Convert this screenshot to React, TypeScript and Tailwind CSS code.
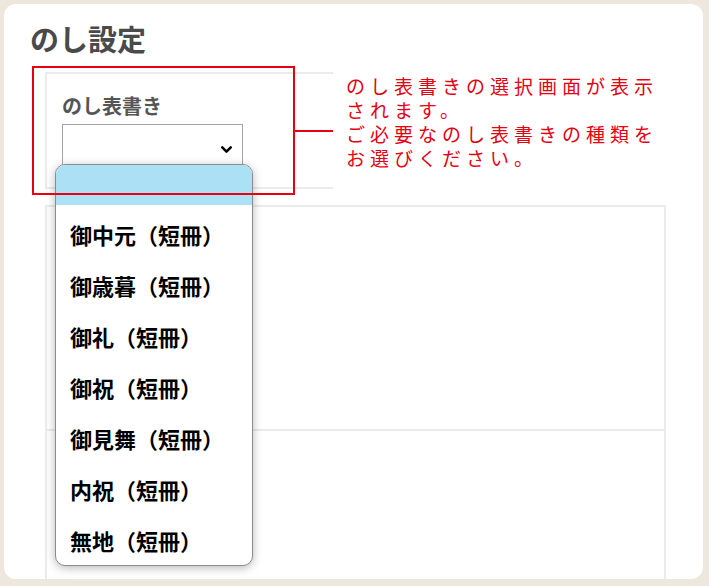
import { ChevronDown } from "lucide-react";

const jp = { fontFamily: '"Noto Sans CJK JP", "Noto Sans", sans-serif' };

const options = [
  "御中元（短冊）",
  "御歳暮（短冊）",
  "御礼（短冊）",
  "御祝（短冊）",
  "御見舞（短冊）",
  "内祝（短冊）",
  "無地（短冊）",
];

const note = ["のし表書きの選択画面が表示", "されます。", "ご必要なのし表書きの種類を", "お選びください。"];

export default function App() {
  return (
    <div className="w-[709px] h-[586px] bg-[#ede7de] pt-[4px] pl-[4px] pr-[6px] pb-[7px]" style={jp}>
      <div className="relative h-full bg-white rounded-[12px] overflow-hidden pl-[26px] pt-[14px]">
        <h1 className="text-[29px] leading-[40px] font-bold text-[#4a4a4a]">のし設定</h1>

        {/* noshi type field */}
        <div className="mt-[14px] ml-[15px] w-[288px] h-[117px] border-y-2 border-l-2 border-[#ebebeb] pl-[15px] pt-[19px]">
          <p className="text-[20px] leading-[26px] font-bold text-[#555]">のし表書き</p>
          <div className="mt-[5px] w-[181px] h-[48px] border border-[#a3a3a3] bg-white flex items-center justify-end pr-[7px] pt-[2px]">
            <ChevronDown size={17} strokeWidth={3.5} className="text-black" />
          </div>
        </div>

        {/* message / preview panel */}
        <div className="mt-[16px] ml-[15px] w-[621px] h-[400px] border-2 border-[#ebebeb] flex flex-col">
          <div className="h-[224px] border-b-2 border-[#ebebeb]" />
          <div className="flex-1" />
        </div>

        {/* open select list */}
        <div className="absolute left-[51px] top-[160px] w-[198px] h-[402px] bg-white rounded-[10px] border border-[#8c8c8c] shadow-[0_2px_10px_rgba(0,0,0,0.28)] overflow-hidden">
          <div className="h-[40px] bg-[#ace0f4]" />
          <ul className="pt-[4px]">
            {options.map((o) => (
              <li key={o} className="h-[51px] flex items-center pl-[14px] text-[22px] font-bold text-black">
                {o}
              </li>
            ))}
          </ul>
        </div>

        {/* callout: frame, leader line and note */}
        <div className="absolute left-[28px] top-[62px] w-[263px] h-[129px] border-2 border-[#e60012]" />
        <div className="absolute left-[291px] top-[70px] flex items-start gap-[13px]">
          <div className="mt-[56px] w-[38px] h-[2px] bg-[#e60012]" />
          <div className="flex flex-col text-[19px] tracking-[5px] text-[#e60012]">
            {note.map((line) => (
              <span key={line} className="block h-[24px] leading-[24px] whitespace-nowrap">
                {line}
              </span>
            ))}
          </div>
        </div>
      </div>
    </div>
  );
}
